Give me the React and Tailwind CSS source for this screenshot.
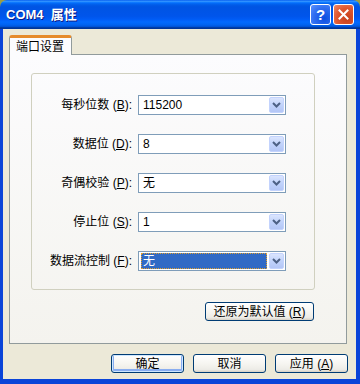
import React from 'react';

const CJK = "font-['Liberation_Sans','Noto_Sans_CJK_SC',sans-serif]";

const rows = [
  { label: '每秒位数', key: 'B', value: '115200' },
  { label: '数据位', key: 'D', value: '8' },
  { label: '奇偶校验', key: 'P', value: '无' },
  { label: '停止位', key: 'S', value: '1' },
  { label: '数据流控制', key: 'F', value: '无', focused: true },
];

function ComboArrow() {
  return (
    <div className="w-[15px] h-[16px] rounded-[2px] border border-[#c3d3fd] bg-[linear-gradient(180deg,#dbe5fe_0%,#c1d3fb_50%,#b3c6f6_100%)] flex items-center justify-center">
      <svg width="9" height="6" viewBox="0 0 9 6">
        <polyline points="1,1 4.5,4.5 8,1" fill="none" stroke="#4d6185" strokeWidth="2" />
      </svg>
    </div>
  );
}

function Combo({ value, focused }) {
  return (
    <div className="w-[148px] h-[20px] border border-[#7f9db9] bg-white flex items-center p-[1px]">
      <div className="flex-1 h-full flex items-center pl-[1px]">
        {focused ? (
          <div className="w-[126px] h-[16px] bg-[#316ac5] outline outline-1 outline-dotted outline-[#e0a030] -outline-offset-1 flex items-center pl-[2px] text-white text-[12px] leading-none">
            {value}
          </div>
        ) : (
          <span className="pl-[2px] text-[12px] leading-none text-black">{value}</span>
        )}
      </div>
      <ComboArrow />
    </div>
  );
}

function XpButton({ children, w, isDefault }) {
  return (
    <button
      className={
        'h-[19px] border border-[#003c74] rounded-[3px] bg-[linear-gradient(180deg,#ffffff_0%,#f4f3ee_60%,#ecebe6_86%,#d6d0c5_100%)] text-[12px] leading-none text-black flex items-center justify-center whitespace-pre ' +
        w +
        (isDefault ? ' shadow-[inset_0_0_0_1px_#cee7ff,inset_0_-1px_0_2px_#89adf0]' : '')
      }
    >
      {children}
    </button>
  );
}

export default function App() {
  return (
    <div className={'w-[360px] h-[384px] bg-[#9c9d45] flex flex-col ' + CJK}>
      {/* title bar */}
      <div className="h-[29px] rounded-t-[7px] bg-[linear-gradient(180deg,#0058ee_0%,#3593ff_4%,#288eff_6%,#127dff_8%,#036ffc_10%,#0262ee_14%,#0057e5_20%,#0054e3_24%,#0055eb_56%,#005bf5_66%,#026afe_76%,#0062ef_86%,#0052d6_92%,#0040ab_94%,#003092_100%)] flex items-center pl-[6px] pr-[6px]">
        <span className="flex-1 text-white font-bold text-[13px] leading-none whitespace-pre [text-shadow:1px_1px_0_#0a1883]">
          COM4  属性
        </span>
        <div className="flex gap-[2px]">
          <div className="w-[21px] h-[21px] rounded-[3px] border border-white bg-[radial-gradient(circle_at_70%_70%,#0c4ee0_0%,#2f6df0_55%,#5b93ff_100%)] flex items-center justify-center">
            <span className="text-white font-bold text-[15px] leading-none font-['Liberation_Sans',sans-serif]">?</span>
          </div>
          <div className="w-[21px] h-[21px] rounded-[3px] border border-white bg-[radial-gradient(circle_at_70%_70%,#c6401b_0%,#e0582f_55%,#f08a6a_100%)] flex items-center justify-center">
            <svg width="11" height="11" viewBox="0 0 11 11">
              <path d="M1.5 1.5 L9.5 9.5 M9.5 1.5 L1.5 9.5" stroke="white" strokeWidth="2" strokeLinecap="square" />
            </svg>
          </div>
        </div>
      </div>

      {/* body */}
      <div className="flex-1 bg-[#ece9d8] border-l-[3px] border-r-[4px] border-b-[5px] border-[#0a44d8] flex flex-col pl-[6px] pr-[9px] pt-[6px]">
        {/* tab header */}
        <div className="flex">
          <div className="relative z-10 -mb-px h-[20px] w-[63px] rounded-t-[3px] border-x border-t-[3px] border-x-[#919b9c] border-t-[#e68b2c] bg-[#fcfcfe] pl-[6px] flex items-center text-[12px] leading-none text-black">
            端口设置
          </div>
        </div>

        {/* tab panel */}
        <div className="w-[338px] h-[290px] border border-[#919b9c] bg-[linear-gradient(180deg,#fcfcfe_0%,#f4f3ee_100%)] pl-[21px] pt-[18px]">
          <div className="w-[284px] h-[217px] border border-[#d0d0bf] rounded-[3px] pt-[21px] flex flex-col gap-[19px]">
            {rows.map((r) => (
              <div key={r.key} className="flex items-center h-[20px]">
                <div className="w-[100px] text-right text-[12px] leading-none text-black whitespace-pre">
                  {r.label} (<span className="underline">{r.key}</span>):
                </div>
                <div className="ml-[6px]">
                  <Combo value={r.value} focused={r.focused} />
                </div>
              </div>
            ))}
          </div>
          <div className="w-[283px] flex justify-end mt-[12px]">
            <XpButton w="w-[109px]">
              还原为默认值 (<span className="underline">R</span>)
            </XpButton>
          </div>
        </div>

        {/* dialog buttons */}
        <div className="flex justify-end gap-[9px] pt-[10px] -mr-[1px]">
          <XpButton w="w-[73px]" isDefault>确定</XpButton>
          <XpButton w="w-[73px]">取消</XpButton>
          <XpButton w="w-[73px]">
            应用 (<span className="underline">A</span>)
          </XpButton>
        </div>
      </div>
    </div>
  );
}
